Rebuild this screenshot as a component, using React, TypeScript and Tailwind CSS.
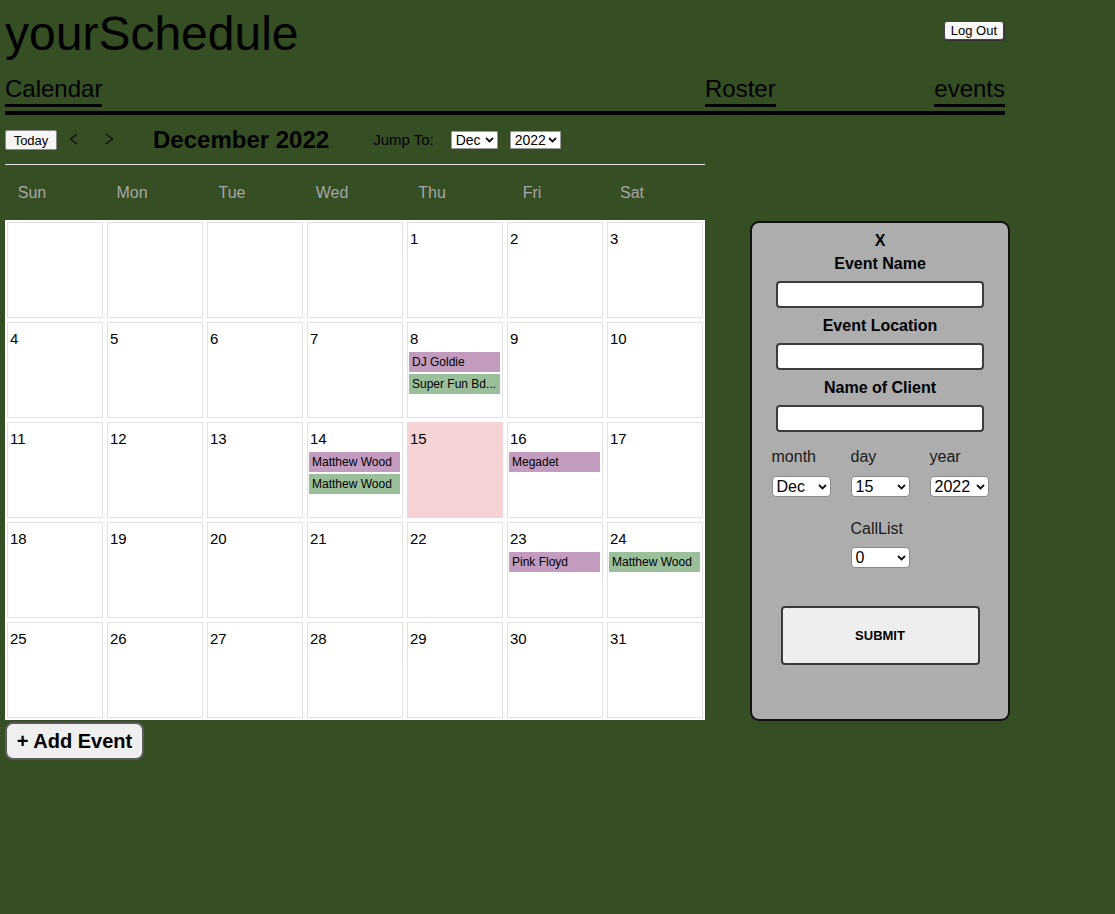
import React from "react";

type Ev = { title: string; color: "p" | "g" };

const events: Record<number, Ev[]> = {
  8: [
    { title: "DJ Goldie", color: "p" },
    { title: "Super Fun Bd...", color: "g" },
  ],
  14: [
    { title: "Matthew Wood", color: "p" },
    { title: "Matthew Wood", color: "g" },
  ],
  16: [{ title: "Megadet", color: "p" }],
  23: [{ title: "Pink Floyd", color: "p" }],
  24: [{ title: "Matthew Wood", color: "g" }],
};

const weeks: (number | null)[][] = [
  [null, null, null, null, 1, 2, 3],
  [4, 5, 6, 7, 8, 9, 10],
  [11, 12, 13, 14, 15, 16, 17],
  [18, 19, 20, 21, 22, 23, 24],
  [25, 26, 27, 28, 29, 30, 31],
];

const days = ["Sun", "Mon", "Tue", "Wed", "Thu", "Fri", "Sat"];

function Chevron({ left }: { left?: boolean }) {
  return (
    <svg width="9" height="12" viewBox="0 0 9 12" className="block">
      <path
        d={left ? "M8 1 L1.5 6 L8 11" : "M1 1 L7.5 6 L1 11"}
        fill="none"
        stroke="#111"
        strokeWidth="1.4"
      />
    </svg>
  );
}

function SelArrow() {
  return (
    <svg width="9" height="6" viewBox="0 0 9 6" className="block">
      <path d="M1 1 L4.5 4.5 L8 1" fill="none" stroke="#111" strokeWidth="1.8" />
    </svg>
  );
}

function FormSelect({ value }: { value: string }) {
  return (
    <div className="relative w-[59px] h-[21px]">
      <select
        defaultValue={value}
        className="block appearance-none w-full h-full bg-white border border-[#8a8a8a] rounded-[4px] pl-[4px] text-[16px] leading-[19px] text-black outline-none font-['Liberation_Sans',Arial,sans-serif]"
      >
        <option value={value}>{value}</option>
      </select>
      <div className="absolute right-[4px] top-[8px] pointer-events-none">
        <SelArrow />
      </div>
    </div>
  );
}

function JumpSelect({ value, w }: { value: string; w: "a" | "b" }) {
  return (
    <div className={w === "a" ? "relative w-[47px] h-[18px]" : "relative w-[51px] h-[18px]"}>
      <select
        defaultValue={value}
        className="block appearance-none w-full h-full bg-white border border-[#9a9a9a] rounded-[1px] pl-[4px] text-[14px] leading-[16px] text-black outline-none font-['Liberation_Sans',Arial,sans-serif]"
      >
        <option value={value}>{value}</option>
      </select>
      <div className="absolute right-[4px] top-[6px] pointer-events-none">
        <SelArrow />
      </div>
    </div>
  );
}

export default function App() {
  return (
    <div className="min-h-screen bg-[#354e24] text-black font-['Liberation_Sans',Arial,sans-serif]">
      {/* header */}
      <div className="w-[1000px] ml-[5px]">
        <div className="flex justify-between items-start h-[75px]">
          <h1 className="mt-[6px] text-[48px] leading-[55px] font-normal">yourSchedule</h1>
          <button className="mt-[21px] mr-[1px] h-[19px] px-[6px] bg-[#f7f7f7] border border-[#444] rounded-[3px] shadow-[1px_1px_0_#333] text-[13px] leading-[15px] text-black">
            Log Out
          </button>
        </div>
        <div className="flex pb-[4px] border-b-4 border-black">
          <div className="w-[700px]">
            <span className="inline-block text-[24px] leading-[28px] pb-[1px] border-b-[3px] border-black">
              Calendar
            </span>
          </div>
          <span className="inline-block text-[24px] leading-[28px] pb-[1px] border-b-[3px] border-black">
            Roster
          </span>
          <span className="ml-auto inline-block text-[24px] leading-[28px] pb-[1px] border-b-[3px] border-black">
            events
          </span>
        </div>
      </div>

      <div className="flex">
        {/* left column */}
        <div className="w-[700px] ml-[5px]">
          <div className="mt-[15px] h-[20px] flex items-center">
            <button className="w-[52px] h-[20px] bg-[#f5f5f5] border border-[#8a8a8a] rounded-[2px] text-[13px] leading-[15px] text-black">
              Today
            </button>
            <div className="ml-[12px] -mt-[3px]">
              <Chevron left />
            </div>
            <div className="ml-[27px] -mt-[3px]">
              <Chevron />
            </div>
            <div className="ml-[39px] text-[24px] font-bold leading-[28px] whitespace-nowrap">December 2022</div>
            <div className="ml-[44px] text-[15px] leading-[18px]">Jump To:</div>
            <div className="ml-[17px]">
              <JumpSelect value="Dec" w="a" />
            </div>
            <div className="ml-[12px]">
              <JumpSelect value="2022" w="b" />
            </div>
          </div>
          <div className="mt-[14px] h-px bg-[#e4e4e4]" />
          <div className="h-[55px] grid grid-cols-7 items-center">
            {days.map((d) => (
              <div key={d} className="w-[54px] text-center text-[16px] leading-[18px] text-[#a6a6a6]">
                {d}
              </div>
            ))}
          </div>
          <div className="bg-white grid grid-cols-7">
            {weeks.flat().map((d, i) => {
              const isToday = d === 15;
              return (
                <div key={i} className="h-[100px] p-[2px]">
                  <div
                    className={
                      isToday
                        ? "h-full bg-[#f5d3d5] border border-[#f5d3d5] pt-[7px] px-[1px]"
                        : "h-full bg-white border border-[#e2e2e2] pt-[7px] px-[1px]"
                    }
                  >
                    {d !== null && (
                      <div className="text-[15px] leading-[18px] pl-[1px]">{d}</div>
                    )}
                    {d !== null && events[d] && (
                      <div className="mt-[4px] flex flex-col gap-[2px] pr-[1px]">
                        {events[d].map((e, j) => (
                          <div
                            key={j}
                            className={
                              e.color === "p"
                                ? "h-[20px] bg-[#c29cbf] text-[12px] leading-[20px] pl-[3px] whitespace-nowrap overflow-hidden"
                                : "h-[20px] bg-[#9cbf9b] text-[12px] leading-[20px] pl-[3px] whitespace-nowrap overflow-hidden"
                            }
                          >
                            {e.title}
                          </div>
                        ))}
                      </div>
                    )}
                  </div>
                </div>
              );
            })}
          </div>
          <button className="mt-[2px] h-[38px] w-[139px] bg-[#efefef] border-2 border-[#5a5a5a] rounded-[8px] text-[20px] font-bold leading-[24px] text-black">
            + Add Event
          </button>
        </div>

        {/* right panel */}
        <div className="ml-[45px] mt-[106px]">
          <div className="w-[260px] h-[500px] bg-[#adadad] border-2 border-[#111] rounded-[9px] flex flex-col items-center pt-[9px]">
            <div className="text-[16px] font-bold leading-[18px]">X</div>
            <div className="mt-[5px] text-[16px] font-bold leading-[18px]">Event Name</div>
            <input className="mt-[8px] w-[208px] h-[27px] bg-white border-2 border-[#3c3c3c] rounded-[4px] outline-none" />
            <div className="mt-[9px] text-[16px] font-bold leading-[18px]">Event Location</div>
            <input className="mt-[8px] w-[208px] h-[27px] bg-white border-2 border-[#3c3c3c] rounded-[4px] outline-none" />
            <div className="mt-[9px] text-[16px] font-bold leading-[18px]">Name of Client</div>
            <input className="mt-[8px] w-[208px] h-[27px] bg-white border-2 border-[#3c3c3c] rounded-[4px] outline-none" />
            <div className="mt-[16px] flex gap-[20px]">
              <div className="w-[59px]">
                <div className="text-[16px] leading-[18px] text-[#1a1a1a]">month</div>
                <div className="mt-[10px]">
                  <FormSelect value="Dec" />
                </div>
              </div>
              <div className="w-[59px]">
                <div className="text-[16px] leading-[18px] text-[#1a1a1a]">day</div>
                <div className="mt-[10px]">
                  <FormSelect value="15" />
                </div>
              </div>
              <div className="w-[59px]">
                <div className="text-[16px] leading-[18px] text-[#1a1a1a]">year</div>
                <div className="mt-[10px]">
                  <FormSelect value="2022" />
                </div>
              </div>
            </div>
            <div className="mt-[23px] w-[59px]">
              <div className="text-[16px] leading-[18px] text-[#1a1a1a]">CallList</div>
              <div className="mt-[9px]">
                <FormSelect value="0" />
              </div>
            </div>
            <button className="mt-[38px] w-[199px] h-[59px] bg-[#eeeeee] border-2 border-[#3a3a3a] rounded-[4px] text-[13px] font-bold leading-[15px] text-black">
              SUBMIT
            </button>
          </div>
        </div>
      </div>
    </div>
  );
}
